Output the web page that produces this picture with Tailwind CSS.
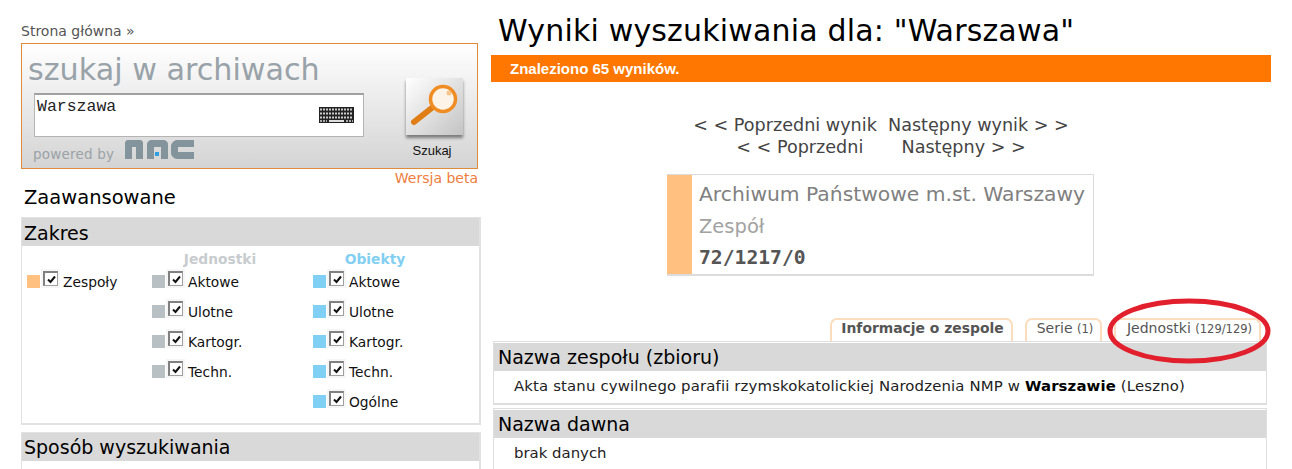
<!DOCTYPE html>
<html lang="pl">
<head>
  <meta charset="UTF-8">
  <title>Wyniki wyszukiwania</title>
  <script src="https://cdn.jsdelivr.net/npm/@tailwindcss/browser@4"></script>
</head>
<body class="bg-white h-[469px] overflow-hidden font-['DejaVu_Sans',sans-serif] text-black">
  <div class="flex relative">

    <!-- left column -->
    <div class="w-[460px] ml-[21px] shrink-0">
      <div class="h-[43px] pt-[23px] text-[14px] leading-[17px] text-[#555]">Strona główna »</div>

      <div class="h-[126px] w-[457px] border border-[#e08a3c] bg-gradient-to-b from-white to-[#d4d4d4] flex">
        <div class="w-[384px]">
          <div class="pl-[6px] pt-[5px] h-[49px] text-[30.2px] leading-[42px] text-[#98a2a8]">szukaj w archiwach</div>
          <div class="ml-[12px] w-[330px] h-[44px] bg-white border border-[#b4b4b4] border-t-2 border-t-[#a0a0a0] flex justify-between pl-[2px] pr-[9px]">
            <span class="pt-[2px] font-['Liberation_Mono',monospace] text-[16.5px] leading-[20px] text-[#222]">Warszawa</span>
            <svg class="mt-[12px]" width="35" height="16" viewBox="0 0 35 16">
              <rect width="35" height="16" fill="#222"/>
              <path d="M1 2.5H34M1 6.5H34M1 10.5H34" stroke="#ccc" stroke-width="2" stroke-dasharray="2 1"/>
              <path d="M10 14H25" stroke="#ddd" stroke-width="2"/>
              <path d="M1 14H8M27 14H34" stroke="#aaa" stroke-width="2" stroke-dasharray="2 1"/>
            </svg>
          </div>
          <div class="ml-[11px] mt-[3px] flex items-start gap-[11px]">
            <span class="pt-[5px] text-[13.5px] leading-[19px] tracking-[0.2px] text-[#9aa2a6]">powered by</span>
            <div class="flex items-end gap-[4px]">
              <div class="w-[18px] h-[19px] border-[7px] border-b-0 border-[#84949c] rounded-t-[4px]"></div>
              <div class="relative w-[21px] h-[19px] border-[7px] border-b-0 border-[#84949c] rounded-t-[5px]">
                <div class="absolute left-[1px] top-[5px] w-[4px] h-[4px] bg-[#2f9fe0]"></div>
              </div>
              <div class="w-[23px] h-[19px] -ml-[1px] border-[7px] border-r-0 border-[#84949c] rounded-l-[7px]"></div>
            </div>
          </div>
        </div>
        <div class="pt-[34px] flex flex-col items-start">
          <div class="w-[57px] h-[57px] bg-gradient-to-br from-white to-[#c4c4c4] shadow-[0_3px_3px_rgba(0,0,0,0.45)] flex items-center justify-center">
            <svg width="50" height="50" viewBox="0 0 50 50">
              <path d="M4 40L23 25" stroke="#e07d14" stroke-width="6" stroke-linecap="round"/>
              <circle cx="33" cy="17" r="12.5" fill="#fdf3e6" stroke="#ef8c24" stroke-width="3.5"/>
              <circle cx="39" cy="11" r="2.5" fill="#f6c48c"/>
            </svg>
          </div>
          <div class="w-[52px] mt-[9px] text-center font-['Liberation_Sans',sans-serif] text-[13px] leading-[14px] text-[#111]">Szukaj</div>
        </div>
      </div>

      <div class="w-[457px] text-right text-[14px] leading-[18px] text-[#ee7d3c]">Wersja beta</div>
      <div class="pl-[3px] h-[30px] text-[19.5px] leading-[22px]">Zaawansowane</div>

      <div class="border-2 border-t border-l border-[#e2e2e2] h-[208px] w-[460px]">
        <div class="h-[28px] bg-[#d9d9d9] pl-[2px] text-[19px] leading-[30px]">Zakres</div>
        <div class="flex pl-[5px]">
          <div class="w-[125px] pt-[25px]" id="col-zespoly"></div>
          <div class="w-[161px]">
            <div class="w-[131px] text-center pl-[5px] text-[13.8px] leading-[20px] pt-[3px] h-[25px] font-bold text-[#c8cccf]">Jednostki</div>
            <div id="col-jednostki"></div>
          </div>
          <div>
            <div class="w-[124px] text-center text-[13.8px] leading-[20px] pt-[3px] h-[25px] font-bold text-[#82cff2]">Obiekty</div>
            <div id="col-obiekty"></div>
          </div>
        </div>
      </div>

      <div class="mt-[7px] border-2 border-t border-l border-b-0 border-[#e2e2e2] h-[40px] w-[460px]">
        <div class="h-[28px] bg-[#d9d9d9] pl-[2px] text-[19px] leading-[28px]">Sposób wyszukiwania</div>
      </div>
    </div>

    <!-- right column -->
    <div class="w-[780px] ml-[10px] shrink-0">
      <h1 class="h-[55px] pl-[7px] pt-[11px] text-[30px] leading-[40px] tracking-[0.17px]">Wyniki wyszukiwania dla: "Warszawa"</h1>
      <div class="h-[27px] bg-[#ff7700] pl-[19px] font-['Liberation_Sans',sans-serif] font-bold text-[15px] leading-[28px] text-white">Znaleziono 65 wyników.</div>

      <div class="pt-[32px] text-[17.6px] leading-[22px] text-[#444] text-center">
        <div class="h-[22px]">&lt; &lt; Poprzedni wynik &nbsp;Następny wynik &gt; &gt;</div>
        <div class="h-[22px]">&lt; &lt; Poprzedni <span class="inline-block w-[27px]"></span> Następny &gt; &gt;</div>
      </div>

      <div class="mt-[16px] ml-[176px] w-[427px] h-[102px] flex border border-[#dcdcdc] border-b-2 border-l-0">
        <div class="w-[25px] bg-[#ffc080]"></div>
        <div class="pl-[7px]">
          <div class="pt-[4px] h-[37px] text-[20.3px] leading-[30px] text-[#808080] whitespace-nowrap">Archiwum Państwowe m.st. Warszawy</div>
          <div class="h-[30px] text-[19.5px] leading-[30px] text-[#a2a2a2]">Zespół</div>
          <div class="pt-[1px] font-['DejaVu_Sans_Mono',monospace] font-bold text-[19.7px] leading-[30px] text-[#555]">72/1217/0</div>
        </div>
      </div>

      <!-- tabs -->
      <div class="mt-[42px] ml-[2px] w-[774px] h-[23px] flex justify-end items-end gap-[12px] pr-[6px] text-[#555]">
        <div class="h-[23px] w-[183px] border-2 border-b-0 border-[#fbdcbc] rounded-t-[7px] pl-[2px] text-center font-bold text-[13.9px] leading-[17px]">Informacje o zespole</div>
        <div class="h-[23px] w-[77px] border-2 border-b-0 border-[#fbdcbc] rounded-t-[7px] pl-[3px] text-center text-[14px] leading-[17px]">Serie <span class="text-[11.5px]">(1)</span></div>
        <div class="h-[23px] w-[147px] border-2 border-b-0 border-[#fbdcbc] rounded-t-[7px] pl-[4px] text-center text-[14px] leading-[17px]">Jednostki <span class="text-[11.5px]">(129/129)</span></div>
      </div>

      <div class="ml-[2px] w-[774px] h-[64px] border border-[#dedede] border-b-2 pt-[1px]">
        <div class="h-[28px] bg-[#d9d9d9] pl-[4px] text-[19px] leading-[28px]">Nazwa zespołu (zbioru)</div>
        <div class="pl-[20px] text-[14.9px] tracking-[0.14px] leading-[31px] text-[#222] whitespace-nowrap">Akta stanu cywilnego parafii rzymskokatolickiej Narodzenia NMP w <b class="text-black">Warszawie</b> (Leszno)</div>
      </div>
      <div class="mt-[3px] ml-[2px] w-[774px] h-[70px] border border-[#dedede] border-b-0 pt-[1px]">
        <div class="h-[28px] bg-[#d9d9d9] pl-[4px] text-[19px] leading-[28px]">Nazwa dawna</div>
        <div class="pl-[20px] text-[14.9px] leading-[31px] text-[#222]">brak danych</div>
      </div>
    </div>

    <!-- red marker drawn over the last tab -->
    <svg class="absolute left-[1106px] top-[296px]" width="168" height="70" viewBox="0 0 168 70">
      <ellipse cx="83" cy="35" rx="79" ry="30" fill="none" stroke="#e21f2d" stroke-width="5"/>
    </svg>
  </div>

  <script>
    function row(swatch, label) {
      return `
        <div class="flex h-[30px]">
          <div class="w-[13px] h-[13px] mt-[4px] ${swatch}"></div>
          <div class="ml-[3px] w-[15px] h-[15px] bg-white border border-[#a0a0a0] border-l-2 border-t-2 border-l-[#808080] border-t-[#808080] shadow-[0_0_0_2px_#f6f6f6] flex items-center justify-center">
            <svg width="9" height="9" viewBox="0 0 9 9"><path d="M1 4.5L3.5 7L8 1.5" fill="none" stroke="#111" stroke-width="2"/></svg>
          </div>
          <span class="ml-[5px] mt-[3px] text-[13.8px] leading-[17px] text-[#111]">${label}</span>
        </div>`;
    }

    document.getElementById("col-zespoly").innerHTML = row("bg-[#ffc080]", "Zespoły");
    document.getElementById("col-jednostki").innerHTML =
      ["Aktowe", "Ulotne", "Kartogr.", "Techn."].map(l => row("bg-[#b9c0c4]", l)).join("");
    document.getElementById("col-obiekty").innerHTML =
      ["Aktowe", "Ulotne", "Kartogr.", "Techn.", "Ogólne"].map(l => row("bg-[#80cff5]", l)).join("");
  </script>
</body>
</html>
